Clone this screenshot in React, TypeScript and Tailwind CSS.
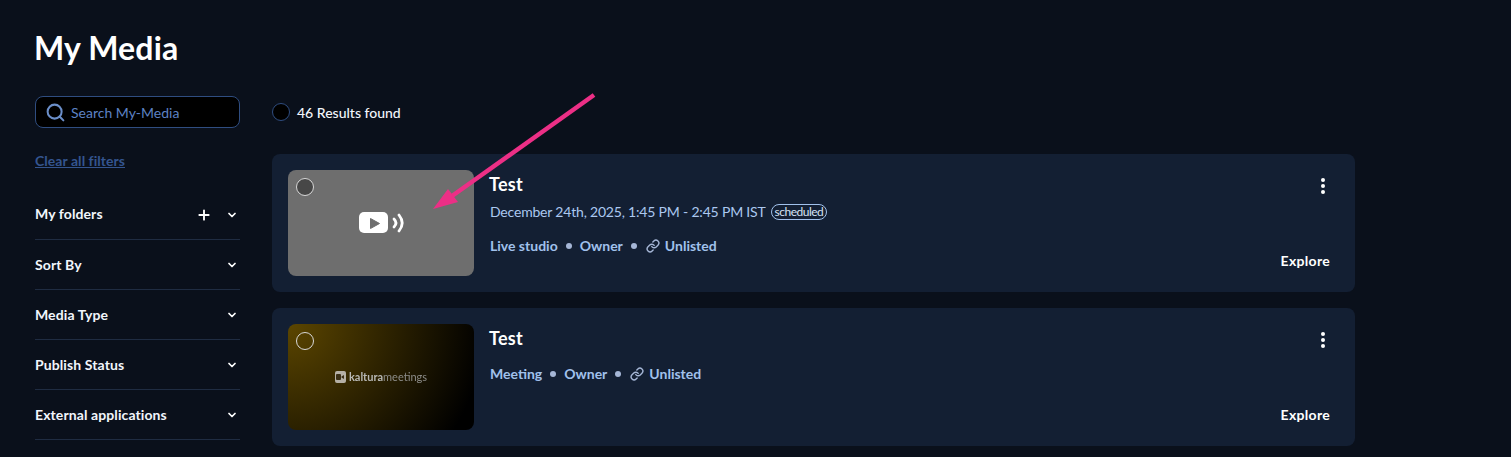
import { ChevronDown, Link as LinkIcon, Plus, Search } from "lucide-react";

const FILTERS = ["Sort By", "Media Type", "Publish Status", "External applications"];

function Filter({ label, withAdd }: { label: string; withAdd?: boolean }) {
  return (
    <div className="flex h-[50px] items-center border-b border-[#1f2c42] pr-[2px]">
      <span className={"flex-1 text-[14px] font-bold tracking-[0.1px] text-[#f2f6fc] " + (withAdd ? "pb-[2px]" : "")}>{label}</span>
      {withAdd && <Plus className="mr-[14px] h-[16px] w-[16px] text-white" strokeWidth={2.8} />}
      <ChevronDown className="h-[12px] w-[12px] text-white" strokeWidth={3.5} />
    </div>
  );
}

function Dot() {
  return <span className="mx-[8px] h-[6px] w-[6px] rounded-full bg-[#a5b6d6]"></span>;
}

function Meta({ kind }: { kind: string }) {
  return (
    <div className="flex items-center text-[14px] font-bold leading-[17px] text-[#a1c1ec]">
      <span>{kind}</span>
      <Dot />
      <span>Owner</span>
      <Dot />
      <LinkIcon className="ml-[1px] mr-[5px] h-[14px] w-[14px] text-[#a5b6d6]" strokeWidth={2.4} />
      <span>Unlisted</span>
    </div>
  );
}

function LiveIcon() {
  return (
    <svg className="h-[26px] w-[46px]" viewBox="0 0 46 26" fill="none">
      <rect x="0" y="2" width="29" height="21" rx="5" fill="#fff" />
      <path d="M11.5 8.5l9 5-9 5z" fill="#6e6e6e" stroke="#6e6e6e" strokeLinejoin="round" />
      <path d="M35 9c2.5 2.5 2.5 5.5 0 8" stroke="#fff" strokeWidth="2.8" strokeLinecap="round" />
      <path d="M40 5c4 5 4 11 0 16" stroke="#fff" strokeWidth="2.8" strokeLinecap="round" />
    </svg>
  );
}

function Check({ tone }: { tone: string }) {
  return <span className={"absolute left-[8px] top-[8px] h-[18px] w-[18px] rounded-full border border-[#d8d8d8] " + tone}></span>;
}

function Card({ thumb, date, kind }: { thumb: React.ReactNode; date?: boolean; kind: string }) {
  return (
    <div className="flex h-[138px] rounded-[8px] bg-[#131f33] p-[16px]">
      {thumb}
      <div className="ml-[16px] flex min-w-0 flex-1 flex-col">
        <div className="flex h-[80px] items-start justify-between">
          <div>
            <h3 className="-ml-[1px] text-[18px] font-bold leading-[28px] tracking-[0.3px] text-white">Test</h3>
            {date && (
              <div className="mt-[4px] flex items-center text-[14px] leading-[20px] tracking-[-0.19px] text-[#abc8f0]">
                December 24th, 2025, 1:45 PM - 2:45 PM IST
                <span className="ml-[5px] rounded-full border border-[#a1c1ec] px-[3px] text-[12px] leading-[14px] tracking-[-0.5px] text-[#d5e2f5]">scheduled</span>
              </div>
            )}
            <div className={date ? "mt-[15px]" : "mt-[13px]"}>
              <Meta kind={kind} />
            </div>
          </div>
          <div className="mr-[14px] mt-[8px] flex flex-col gap-[2px]">
            <span className="h-[4px] w-[4px] rounded-full bg-white"></span>
            <span className="h-[4px] w-[4px] rounded-full bg-white"></span>
            <span className="h-[4px] w-[4px] rounded-full bg-white"></span>
          </div>
        </div>
        <div className="mt-auto flex justify-end pb-[6px] pr-[9px]">
          <span className="text-[14px] font-bold leading-[18px] tracking-[0.3px] text-white">Explore</span>
        </div>
      </div>
    </div>
  );
}

export default function App() {
  return (
    <div className="relative h-[457px] overflow-hidden bg-[#0a101b] font-['Lato',sans-serif]">
      <h1 className="pl-[34px] pt-[28px] text-[32px] font-bold leading-[40px] tracking-[0.15px] text-white">My Media</h1>

      <div className="mt-[28px] flex">
        <aside className="ml-[35px] w-[205px] shrink-0">
          <div className="flex h-[32px] items-center gap-[5px] rounded-[8px] border border-[#2f4d80] bg-black pl-[9px]">
            <Search className="h-[21px] w-[21px] text-[#6b8ec8]" strokeWidth={2.3} />
            <span className="text-[14px] text-[#5d82c4]">Search My-Media</span>
          </div>
          <div className="mt-[24px] text-[14px] font-bold leading-[18px] tracking-[0.05px] text-[#34558f] underline">Clear all filters</div>
          <div className="mt-[20px] flex flex-col">
            <Filter label="My folders" withAdd />
            {FILTERS.map((f) => (
              <Filter key={f} label={f} />
            ))}
          </div>
        </aside>

        <main className="ml-[32px] w-[1083px] shrink-0">
          <div className="flex h-[32px] items-center gap-[7px]">
            <span className="h-[18px] w-[18px] rounded-full border border-[#2f4d80] bg-black"></span>
            <span className="text-[14px] font-medium text-[#f2f6fc]">46 Results found</span>
          </div>
          <div className="mt-[26px] flex flex-col gap-[16px]">
            <Card
              date
              kind="Live studio"
              thumb={
                <div className="relative flex h-[106px] w-[186px] shrink-0 items-center justify-center rounded-[8px] bg-[#6e6e6e]">
                  <Check tone="bg-[#474747]" />
                  <div className="ml-[2px] flex">
                    <LiveIcon />
                  </div>
                </div>
              }
            />
            <Card
              kind="Meeting"
              thumb={
                <div className="relative flex h-[106px] w-[186px] shrink-0 items-center justify-center rounded-[8px] bg-[radial-gradient(circle_at_top_left,#5c4600,#000_92%)]">
                  <Check tone="bg-transparent" />
                  <div className="flex items-center text-[11px] blur-[0.3px]">
                    <span className="mr-[3px] flex h-[12px] w-[11px] items-center justify-center rounded-[2px] bg-[#b5b0a5]">
                      <svg className="h-[6px] w-[8px]" viewBox="0 0 8 6" fill="#3a2f15">
                        <rect x="0" y="0" width="5" height="6" rx="1" />
                        <path d="M5.5 2.5L8 1v4L5.5 3.5z" />
                      </svg>
                    </span>
                    <span className="font-bold text-[#b8b8b4]">kaltura</span>
                    <span className="font-normal text-[#8c8c88]">meetings</span>
                  </div>
                </div>
              }
            />
          </div>
        </main>
      </div>

      <svg className="absolute left-[430px] top-[90px] h-[125px] w-[170px]" viewBox="0 0 170 125" fill="none">
        <path d="M164 5L22 106" stroke="#ec2f86" strokeWidth="4.5" />
        <path d="M3 119L18 99L28 112z" fill="#ec2f86" />
      </svg>
    </div>
  );
}
